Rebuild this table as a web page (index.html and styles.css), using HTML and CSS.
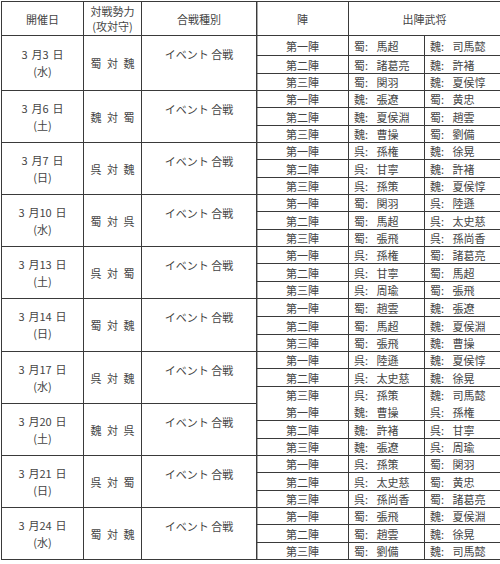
FILE: index.html
```html
<!DOCTYPE html>
<html lang="ja">
<head>
<meta charset="utf-8">
<title>出陣スケジュール</title>
<link rel="stylesheet" href="styles.css">
</head>
<body>
<table class="sched">
  <colgroup>
    <col class="c-date"><col class="c-fac"><col class="c-type"><col class="c-jin"><col class="c-g1"><col class="c-g2">
  </colgroup>
  <thead>
    <tr class="hdr">
      <th>開催日</th>
      <th class="two">対戦勢力<br>(攻対守)</th>
      <th>合戦種別</th>
      <th class="jin">陣</th>
      <th colspan="2">出陣武将</th>
    </tr>
  </thead>
  <tbody>
    <tr class="h20"><td rowspan="3" class="date">3 月3 日<br>(水)</td><td rowspan="3" class="fac">蜀 対 魏</td><td rowspan="3" class="type">イベント 合戦</td><td class="jin">第一陣</td><td class="gen">蜀: 馬超</td><td class="gen">魏: 司馬懿</td></tr>
    <tr class="h18"><td class="jin">第二陣</td><td class="gen">蜀: 諸葛亮</td><td class="gen">魏: 許褚</td></tr>
    <tr class="h17"><td class="jin">第三陣</td><td class="gen">蜀: 関羽</td><td class="gen">魏: 夏侯惇</td></tr>

    <tr class="h17"><td rowspan="3" class="date">3 月6 日<br>(土)</td><td rowspan="3" class="fac">魏 対 蜀</td><td rowspan="3" class="type">イベント 合戦</td><td class="jin">第一陣</td><td class="gen">魏: 張遼</td><td class="gen">蜀: 黄忠</td></tr>
    <tr class="h18"><td class="jin">第二陣</td><td class="gen">魏: 夏侯淵</td><td class="gen">蜀: 趙雲</td></tr>
    <tr class="h17"><td class="jin">第三陣</td><td class="gen">魏: 曹操</td><td class="gen">蜀: 劉備</td></tr>

    <tr class="h17"><td rowspan="3" class="date">3 月7 日<br>(日)</td><td rowspan="3" class="fac">呉 対 魏</td><td rowspan="3" class="type">イベント 合戦</td><td class="jin">第一陣</td><td class="gen">呉: 孫権</td><td class="gen">魏: 徐晃</td></tr>
    <tr class="h18"><td class="jin">第二陣</td><td class="gen">呉: 甘寧</td><td class="gen">魏: 許褚</td></tr>
    <tr class="h17"><td class="jin">第三陣</td><td class="gen">呉: 孫策</td><td class="gen">魏: 夏侯惇</td></tr>

    <tr class="h17"><td rowspan="3" class="date">3 月10 日<br>(水)</td><td rowspan="3" class="fac">蜀 対 呉</td><td rowspan="3" class="type">イベント 合戦</td><td class="jin">第一陣</td><td class="gen">蜀: 関羽</td><td class="gen">呉: 陸遜</td></tr>
    <tr class="h18"><td class="jin">第二陣</td><td class="gen">蜀: 馬超</td><td class="gen">呉: 太史慈</td></tr>
    <tr class="h17"><td class="jin">第三陣</td><td class="gen">蜀: 張飛</td><td class="gen">呉: 孫尚香</td></tr>

    <tr class="h17"><td rowspan="3" class="date">3 月13 日<br>(土)</td><td rowspan="3" class="fac">呉 対 蜀</td><td rowspan="3" class="type">イベント 合戦</td><td class="jin">第一陣</td><td class="gen">呉: 孫権</td><td class="gen">蜀: 諸葛亮</td></tr>
    <tr class="h18"><td class="jin">第二陣</td><td class="gen">呉: 甘寧</td><td class="gen">蜀: 馬超</td></tr>
    <tr class="h17"><td class="jin">第三陣</td><td class="gen">呉: 周瑜</td><td class="gen">蜀: 張飛</td></tr>

    <tr class="h18"><td rowspan="3" class="date">3 月14 日<br>(日)</td><td rowspan="3" class="fac">蜀 対 魏</td><td rowspan="3" class="type">イベント 合戦</td><td class="jin">第一陣</td><td class="gen">蜀: 趙雲</td><td class="gen">魏: 張遼</td></tr>
    <tr class="h18"><td class="jin">第二陣</td><td class="gen">蜀: 馬超</td><td class="gen">魏: 夏侯淵</td></tr>
    <tr class="h17"><td class="jin">第三陣</td><td class="gen">蜀: 張飛</td><td class="gen">魏: 曹操</td></tr>

    <tr class="h17"><td rowspan="3" class="date">3 月17 日<br>(水)</td><td rowspan="3" class="fac">呉 対 魏</td><td rowspan="3" class="type">イベント 合戦</td><td class="jin">第一陣</td><td class="gen">呉: 陸遜</td><td class="gen">魏: 夏侯惇</td></tr>
    <tr class="h18"><td class="jin">第二陣</td><td class="gen">呉: 太史慈</td><td class="gen">魏: 徐晃</td></tr>
    <tr class="h17 open"><td class="jin">第三陣</td><td class="gen">呉: 孫策</td><td class="gen">魏: 司馬懿</td></tr>

    <tr class="h17"><td rowspan="3" class="date">3 月20 日<br>(土)</td><td rowspan="3" class="fac">魏 対 呉</td><td rowspan="3" class="type">イベント 合戦</td><td class="jin">第一陣</td><td class="gen">魏: 曹操</td><td class="gen">呉: 孫権</td></tr>
    <tr class="h18"><td class="jin">第二陣</td><td class="gen">魏: 許褚</td><td class="gen">呉: 甘寧</td></tr>
    <tr class="h17"><td class="jin">第三陣</td><td class="gen">魏: 張遼</td><td class="gen">呉: 周瑜</td></tr>

    <tr class="h17"><td rowspan="3" class="date">3 月21 日<br>(日)</td><td rowspan="3" class="fac">呉 対 蜀</td><td rowspan="3" class="type">イベント 合戦</td><td class="jin">第一陣</td><td class="gen">呉: 孫策</td><td class="gen">蜀: 関羽</td></tr>
    <tr class="h18"><td class="jin">第二陣</td><td class="gen">呉: 太史慈</td><td class="gen">蜀: 黄忠</td></tr>
    <tr class="h17"><td class="jin">第三陣</td><td class="gen">呉: 孫尚香</td><td class="gen">蜀: 諸葛亮</td></tr>

    <tr class="h17"><td rowspan="3" class="date">3 月24 日<br>(水)</td><td rowspan="3" class="fac">蜀 対 魏</td><td rowspan="3" class="type">イベント 合戦</td><td class="jin">第一陣</td><td class="gen">蜀: 張飛</td><td class="gen">魏: 夏侯淵</td></tr>
    <tr class="h18"><td class="jin">第二陣</td><td class="gen">蜀: 趙雲</td><td class="gen">魏: 徐晃</td></tr>
    <tr class="h17"><td class="jin">第三陣</td><td class="gen">蜀: 劉備</td><td class="gen">魏: 司馬懿</td></tr>
  </tbody>
</table>
</body>
</html>
```

FILE: styles.css
```css
html, body {
  margin: 0;
  padding: 0;
  background: #ffffff;
}

.sched {
  border-collapse: collapse;
  table-layout: fixed;
  width: 499px;
  margin: 1px 0 0 1px;
  font-family: "Noto Sans CJK JP", "Liberation Sans", sans-serif;
  font-size: 11px;
  color: #444444;
}

.c-date { width: 82px; }
.c-fac  { width: 58px; }
.c-type { width: 115px; }
.c-jin  { width: 92px; }
.c-g1   { width: 76px; }
.c-g2   { width: 76px; }

.sched th,
.sched td {
  border: 1px solid #3a3a3a;
  padding: 0;
  line-height: 14px;
  font-weight: normal;
  text-align: center;
  vertical-align: middle;
  white-space: nowrap;
}

.hdr { height: 34px; }
.hdr th.two { line-height: 15px; }

.h20 { height: 20px; }
.h18 { height: 18px; }
.h17 { height: 17px; }

.sched .jin {
  box-shadow: inset 1px 0 0 #a8a8a8;
}

.sched td.date {
  word-spacing: 1.5px;
  line-height: 17px;
}

.fac {
  word-spacing: 3px;
}

.sched td.type {
  vertical-align: top;
  padding-top: 11px;
}

.sched td.gen {
  text-align: left;
  padding-left: 5px;
  word-spacing: 6px;
}

.open td {
  border-bottom-style: hidden;
}
```
